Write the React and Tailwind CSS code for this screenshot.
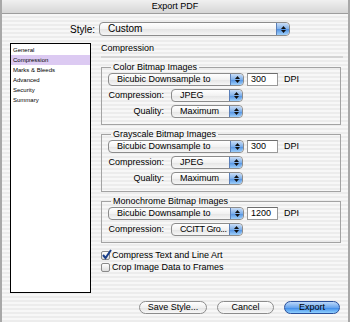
import React from "react";

const stripes =
  "bg-[repeating-linear-gradient(180deg,#ececec_0px,#ececec_2px,#f7f7f7_2px,#f7f7f7_4px)]";

function Arrows() {
  return (
    <span className="absolute right-0 top-0 bottom-0 w-[13px] rounded-r-[4px] border-l border-[#5a7fb8] bg-[linear-gradient(180deg,#c9ddf6_0%,#7fb0ea_50%,#4f8fe0_51%,#9fd0fb_100%)] flex flex-col items-center justify-center gap-[1px]">
      <svg width="5" height="3" viewBox="0 0 5 3">
        <path d="M2.5 0L5 3H0z" fill="#111" />
      </svg>
      <svg width="5" height="3" viewBox="0 0 5 3">
        <path d="M0 0h5L2.5 3z" fill="#111" />
      </svg>
    </span>
  );
}

function PopUp({ label, className, tight }) {
  return (
    <div
      className={
        "relative rounded-[4px] border border-[#8c8c8c] bg-[linear-gradient(180deg,#ffffff_0%,#f2f2f2_50%,#e4e4e4_51%,#f6f6f6_100%)] pl-[8px] pr-[13px] text-[9px] leading-[11px] text-black " +
        className
      }
    >
      <span className={"block whitespace-nowrap " + (tight ? "tracking-[-0.4px]" : "")}>
        {label}
      </span>
      <Arrows />
    </div>
  );
}

function Row({ label, value }) {
  return (
    <div className="flex items-center h-[13px] mt-[3px]">
      <span className="w-[63px] text-right pr-[7px] text-[9px] leading-[11px]">{label}</span>
      <PopUp label={value} tight={value.length > 8} className="w-[72px] h-[13px]" />
    </div>
  );
}

function Group({ title, dpi, rows }) {
  return (
    <fieldset className="border border-[#a3a3a3] pl-[6px] pr-[6px] pb-[6px] mt-[4px]">
      <legend className="ml-[3px] px-[2px] text-[9px] leading-[10px]">{title}</legend>
      <div className="flex items-center h-[13px] mt-[1px]">
        <PopUp label="Bicubic Downsample to" className="w-[136px] h-[13px]" />
        <div className="ml-[3px] w-[31px] h-[13px] bg-white border border-[#9a9a9a] border-t-[#6d6d6d] text-[9px] leading-[11px] pl-[3px]">
          {dpi}
        </div>
        <span className="ml-[6px] text-[9px] leading-[11px]">DPI</span>
      </div>
      {rows.map((r) => (
        <Row key={r[0]} label={r[0]} value={r[1]} />
      ))}
    </fieldset>
  );
}

function Check({ checked, label }) {
  return (
    <div className="flex items-center gap-[2px] h-[12px]">
      <span className="relative w-[9px] h-[9px] rounded-[2px] border border-[#8a8a8a] bg-[linear-gradient(180deg,#ffffff,#dedede)]">
        {checked && (
          <svg
            className="absolute -left-[1px] -top-[3px]"
            width="11"
            height="11"
            viewBox="0 0 11 11"
          >
            <path
              d="M2 6l2.5 3L10 1"
              fill="none"
              stroke="#1a3f8a"
              strokeWidth="2"
            />
          </svg>
        )}
      </span>
      <span className="text-[9px] leading-[11px]">{label}</span>
    </div>
  );
}

function Button({ children, primary, className }) {
  return (
    <div
      className={
        "h-[13px] rounded-full border text-[9px] leading-[11px] flex items-center justify-center " +
        (primary
          ? "border-[#2a4f9a] bg-[linear-gradient(180deg,#bcd8fa_0%,#6aa6ee_50%,#3a86e6_51%,#8fd0ff_100%)] "
          : "border-[#8c8c8c] bg-[linear-gradient(180deg,#ffffff_0%,#f0f0f0_50%,#e2e2e2_51%,#f8f8f8_100%)] ") +
        className
      }
    >
      {children}
    </div>
  );
}

export default function App() {
  const sections = ["General", "Compression", "Marks & Bleeds", "Advanced", "Security", "Summary"];

  return (
    <div
      className={
        "w-[350px] h-[322px] overflow-hidden border-l-2 border-r-2 border-[#a8a8a8] text-black font-['Liberation_Sans',Arial,sans-serif] " +
        stripes
      }
    >
      <div className="h-[14px] border-b border-[#9d9d9d] bg-[linear-gradient(180deg,#f0f0f0,#d6d6d6)] flex items-center justify-center text-[9px]">
        Export PDF
      </div>

      <div className="flex items-center mt-[8px] h-[14px]">
        <span className="w-[97px] text-right pr-[4px] text-[10px]">Style:</span>
        <PopUp label="Custom" className="w-[191px] h-[14px] leading-[12px] text-[10px]" />
      </div>

      <div className="flex mt-[7px] h-[250px]">
        <div className="ml-[8px] w-[81px] h-[250px] border border-black bg-white pt-[1px]">
          {sections.map((s) => (
            <div
              key={s}
              className={
                "h-[10px] pl-[2px] text-[6px] leading-[10px] " +
                (s === "Compression" ? "bg-[#dccaf2]" : "")
              }
            >
              {s}
            </div>
          ))}
        </div>

        <div className="ml-[10px] w-[242px]">
          <div className="text-[9px] leading-[11px] pb-[2px] border-b-2 border-[#d4d4d4]">
            Compression
          </div>
          <div className="pr-[2px]">
            <Group
              title="Color Bitmap Images"
              dpi="300"
              rows={[
                ["Compression:", "JPEG"],
                ["Quality:", "Maximum"],
              ]}
            />
            <Group
              title="Grayscale Bitmap Images"
              dpi="300"
              rows={[
                ["Compression:", "JPEG"],
                ["Quality:", "Maximum"],
              ]}
            />
            <Group
              title="Monochrome Bitmap Images"
              dpi="1200"
              rows={[["Compression:", "CCITT Gro..."]]}
            />
          </div>
          <div className="mt-[6px]">
            <Check checked label="Compress Text and Line Art" />
            <Check label="Crop Image Data to Frames" />
          </div>
        </div>
      </div>

      <div className="flex mt-[8px] justify-end gap-[10px] pr-[8px]">
        <Button className="w-[68px]">Save Style...</Button>
        <Button className="w-[57px]">Cancel</Button>
        <Button primary className="w-[56px]">Export</Button>
      </div>
    </div>
  );
}
